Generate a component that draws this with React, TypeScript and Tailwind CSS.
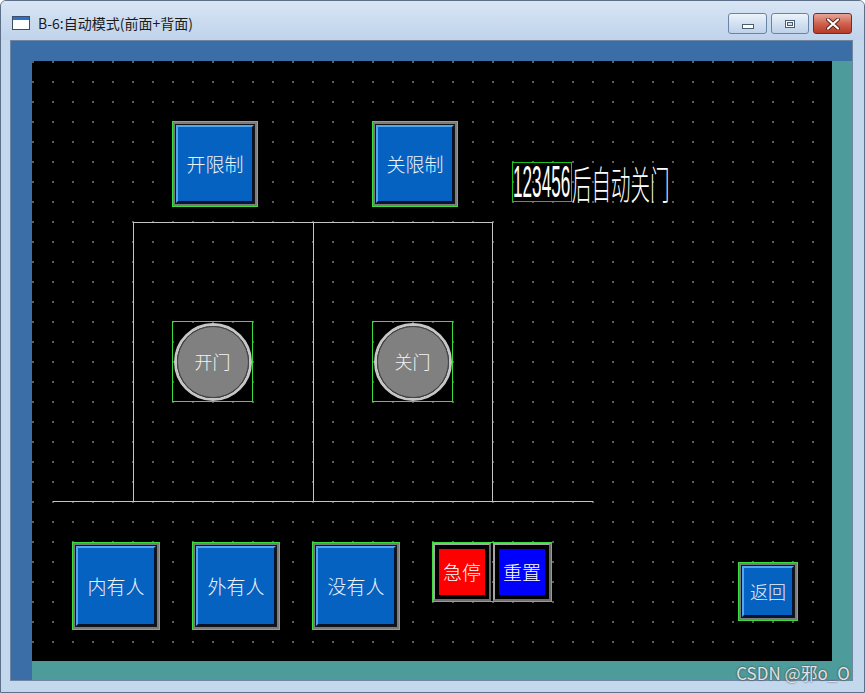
import clsx from "clsx";

const cjk = "font-['Noto_Sans_CJK_SC','Noto_Sans',sans-serif]";

function BlueButton({ label, box, text = "text-[19px]" }: { label: string; box: string; text?: string }) {
  return (
    <div className={clsx("flex shrink-0 border border-[#3ade3a]", box)}>
      <div className="flex flex-1 border-2 border-[#7c7c7c]">
        <div className="flex flex-1 border border-[#161616]">
          <div
            className={clsx(
              "flex flex-1 items-center justify-center border-t-2 border-l-2 border-r-2 border-b-2 border-t-[#52a8ee] border-l-[#52a8ee] border-r-[#06132a] border-b-[#06132a] bg-[#0562c1] font-light text-[#edf3fb]",
              text,
            )}
          >
            {label}
          </div>
        </div>
      </div>
    </div>
  );
}

function FlatButton({ label, fill }: { label: string; fill: string }) {
  return (
    <div className="flex h-[58px] w-[58px] border-2 border-t-[#a6a6a6] border-l-[#a6a6a6] border-r-[#6e6e6e] border-b-[#6e6e6e]">
      <div className={clsx("flex flex-1 items-center justify-center border-4 border-black text-[19px] font-light text-white", fill)}>
        {label}
      </div>
    </div>
  );
}

function Lamp({ label }: { label: string }) {
  return (
    <div className="flex h-[81px] w-[81px] items-center justify-center border border-[#3ade3a]">
      <div className="flex h-[78px] w-[78px] rounded-full border-[3px] border-[#c6c6c6]">
        <div className="flex flex-1 items-center justify-center rounded-full border border-[#474747] bg-[#808080] text-[18px] font-light text-[#f4f4f4]">
          {label}
        </div>
      </div>
    </div>
  );
}

function CaptionButton({ kind }: { kind: "min" | "max" | "close" }) {
  if (kind === "close") {
    return (
      <div className="flex h-[21px] w-[39px] items-center justify-center rounded-[3px] border border-[#7a2a22] bg-gradient-to-b from-[#e6a597] via-[#d0624f] to-[#b53a28]">
        <svg width="14" height="12" viewBox="0 0 14 12">
          <path d="M2 1.5 L12 10.5 M12 1.5 L2 10.5" stroke="#5a2018" strokeWidth="4" strokeLinecap="round" />
          <path d="M2 1.5 L12 10.5 M12 1.5 L2 10.5" stroke="#ffffff" strokeWidth="2.2" strokeLinecap="round" />
        </svg>
      </div>
    );
  }
  return (
    <div
      className={clsx(
        "flex h-[21px] items-center justify-center rounded-[3px] border border-[#6c84a4] bg-gradient-to-b from-[#edf3fa] via-[#d3e1f1] to-[#bfd2e9]",
        kind === "min" ? "w-[39px]" : "w-[38px]",
      )}
    >
      {kind === "min" ? (
        <svg width="14" height="12" viewBox="0 0 14 12">
          <rect x="1.5" y="6.5" width="11" height="4" fill="#ffffff" stroke="#4b5d73" />
        </svg>
      ) : (
        <svg width="14" height="12" viewBox="0 0 14 12">
          <rect x="2.5" y="2.5" width="9" height="7" fill="none" stroke="#4b5d73" strokeWidth="1" />
          <rect x="3.5" y="3.5" width="7" height="5" fill="none" stroke="#ffffff" strokeWidth="1" />
          <rect x="4.5" y="4.5" width="5" height="3" fill="none" stroke="#4b5d73" strokeWidth="1" />
        </svg>
      )}
    </div>
  );
}

export default function App() {
  return (
    <div className={clsx("relative flex h-[693px] w-[865px] flex-col overflow-hidden rounded-t-[6px] border border-[#5d6f86] bg-[#c3d7ed]", cjk)}>
      <header className="flex h-[39px] shrink-0 items-start bg-gradient-to-b from-[#d8e5f4] to-[#bfd3eb] pl-[11px] pr-[12px]">
        <svg className="mt-[15px]" width="18" height="14" viewBox="0 0 18 14">
          <rect x="0.5" y="0.5" width="17" height="13" fill="#ffffff" stroke="#3c4e66" />
          <rect x="1" y="1" width="16" height="3" fill="#2c6fcf" />
        </svg>
        <span className="ml-[8px] mt-[12px] text-[14px] leading-[20px] text-[#1b1b1b]">B-6:自动模式(前面+背面)</span>
        <div className="ml-auto mt-[12px] flex gap-[4px]">
          <CaptionButton kind="min" />
          <CaptionButton kind="max" />
          <CaptionButton kind="close" />
        </div>
      </header>

      <div className="flex flex-1 pb-[11px] pl-[9px] pr-[11px]">
        <div className="flex flex-1 border border-[#6f86a2] bg-[#3b6ea6] pl-[21px] pt-[20px]">
          <div className="h-[619px] w-[820px] bg-[#4e9b9b]">
            <div className="flex h-[600px] w-[800px] flex-col overflow-hidden bg-black bg-[radial-gradient(circle_at_1px_1px,#5c5c5c_0.8px,transparent_1.3px)] bg-size-[20px_20px] text-white">
              <div className="flex items-start pl-[140px] pt-[60px]">
                <BlueButton label="开限制" box="h-[86px] w-[86px]" />
                <div className="ml-[114px]">
                  <BlueButton label="关限制" box="h-[86px] w-[86px]" />
                </div>
                <div className="ml-[54px] mt-[41px] flex items-center">
                  <div className="flex h-[40px] w-[60px] items-center border border-[#19c419]">
                    <span className="block origin-left scale-x-[0.39] whitespace-nowrap font-['Liberation_Sans',sans-serif] text-[44px] leading-none">
                      123456
                    </span>
                  </div>
                  <div className="w-[97px]">
                    <span className="block origin-left scale-x-[0.5] whitespace-nowrap text-[39px] font-light leading-none">后自动关门</span>
                  </div>
                </div>
              </div>

              <div className="ml-[101px] mt-[15px] flex h-[279px] w-[360px] border-x border-t border-[#c4c4c4]">
                <div className="w-[180px] border-r border-[#c4c4c4] pl-[38px] pt-[98px]">
                  <Lamp label="开门" />
                </div>
                <div className="flex-1 pl-[58px] pt-[98px]">
                  <Lamp label="关门" />
                </div>
              </div>
              <div className="ml-[21px] h-px w-[540px] bg-[#c4c4c4]" />

              <div className="mt-[40px] flex items-start gap-[32px] pl-[40px]">
                <BlueButton label="内有人" box="h-[88px] w-[88px]" />
                <BlueButton label="外有人" box="h-[88px] w-[88px]" />
                <BlueButton label="没有人" box="h-[88px] w-[88px]" />
                <div className="flex h-[60px] w-[120px] gap-[2px] border border-[#3ade3a]">
                  <FlatButton label="急停" fill="bg-[#ff0000]" />
                  <FlatButton label="重置" fill="bg-[#0000ff]" />
                </div>
                <div className="ml-[154px] mt-[20px]">
                  <BlueButton label="返回" box="h-[59px] w-[60px]" text="text-[18px]" />
                </div>
              </div>
            </div>
          </div>
        </div>
      </div>

      <span className="absolute bottom-[8px] right-[14px] text-[17px] leading-[22px] text-[#e2e2e2] [text-shadow:0_0_2px_#2a2a2a]">
        CSDN @邪o_O
      </span>
    </div>
  );
}
